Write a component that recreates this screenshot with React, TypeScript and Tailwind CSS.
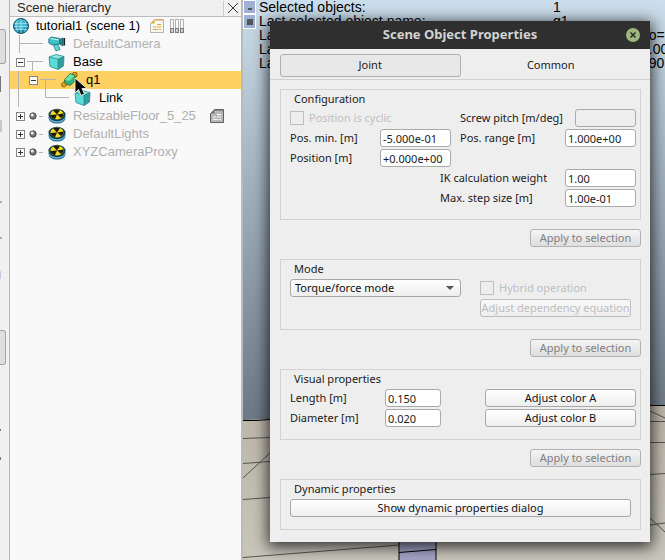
import type { ReactNode } from "react";

const uiFont = "font-['Noto_Sans','Open_Sans',sans-serif]";
const sceneFont = "font-['Liberation_Sans',Arial,sans-serif]";

/* ---------- icons ---------- */

function GlobeIcon() {
  return (
    <svg width="16" height="16" viewBox="0 0 16 16">
      <circle cx="8" cy="8" r="7.5" fill="#1487a8" />
      <circle cx="7" cy="6.5" r="5.5" fill="#3fb8d2" />
      <path
        d="M1 5.5h14M.5 8.5h15M2 11.5h12M8 1v14M4.500 2C2.500 6 2.500 10 4.500 14M11.500 2c2 4 2 8 0 12"
        stroke="#b5e8f2"
        strokeWidth="0.7"
        fill="none"
      />
      <circle cx="8" cy="8" r="7.500" fill="none" stroke="#17566a" />
    </svg>
  );
}

function CameraIcon() {
  return (
    <svg width="18" height="16" viewBox="0 0 18 16">
      <path d="M6 8v3l2 4 4-1.500-2-5z" fill="#5fd6d6" stroke="#217e86" strokeWidth="0.8" />
      <path d="M.8 3L3 1l9 1.500V8L4 9 .8 7z" fill="#3fbfc6" stroke="#1b6a72" strokeWidth="0.8" />
      <path d="M2.500 2.600l8.500 1.200" stroke="#a5f0ee" strokeWidth="1.300" />
      <path d="M12 3.500l3-1.500v8l-3-2z" fill="#2a8f96" stroke="#174e55" strokeWidth="0.8" />
      <path d="M16.300 2v7.500" stroke="#09272b" strokeWidth="1.600" />
    </svg>
  );
}

function CubeIcon() {
  return (
    <svg width="18" height="16" viewBox="0 0 18 16">
      <path d="M1 3l7-2.500L16 2.500 10 5z" fill="#8aeee6" />
      <path d="M1 3l9 2v10.500L2 12.500z" fill="#5bdcd6" />
      <path d="M10 5l6-2.500-.5 9.500-5.500 3.500z" fill="#2f9e9c" />
      <path d="M1 3l7-2.500 8 2-.5 9.500-5.500 3.500-8-3zM1 3l9 2v10.500M10 5l6-2.500" fill="none" stroke="#2b8a8b" strokeWidth="0.8" />
    </svg>
  );
}

function JointIcon() {
  return (
    <svg width="18" height="16" viewBox="0 0 18 16">
      <path d="M.5 12l4-4 3 3.500-4 3.500-2.500-.5z" fill="#e0a412" stroke="#7c5303" strokeWidth="0.8" />
      <path d="M10 3l3-3 3 1v3l-3 3z" fill="#e0a412" stroke="#7c5303" strokeWidth="0.8" />
      <path d="M3.500 8L9 1.500l5 2V9l-5 4.500-5-2z" fill="#31b478" stroke="#14633f" strokeWidth="0.8" />
      <path d="M4 8l5-6 4.500 1.800L8.500 9z" fill="#6fe3a4" />
    </svg>
  );
}

function ModelIcon() {
  return (
    <svg width="18" height="16" viewBox="0 0 18 16">
      <ellipse cx="9" cy="10" rx="8.500" ry="5.500" fill="#1b5f8c" />
      <ellipse cx="9" cy="9" rx="8.300" ry="5.500" fill="#67bfe0" />
      <ellipse cx="9" cy="7" rx="8.500" ry="6.200" fill="#17414f" />
      <ellipse cx="9" cy="6.500" rx="6.500" ry="5" fill="#f3dc1c" />
      <path d="M9 6.500L5 2.500Q8.500.8 12 2.200zM9 6.500l6.300-1Q16 8 13 10zM9 6.500l-2 4.800Q3 10 2.500 7z" fill="#1c1c12" />
    </svg>
  );
}

function SphereIcon() {
  return (
    <svg width="8" height="8" viewBox="0 0 8 8">
      <circle cx="4" cy="4" r="3.200" fill="#777" stroke="#333" strokeWidth="0.800" />
      <circle cx="3.200" cy="3" r="1.500" fill="#eee" />
    </svg>
  );
}

function ScriptIcon({ tone }: { tone: "gold" | "gray" }) {
  const gray = tone === "gray";
  return (
    <svg width="14" height="14" viewBox="0 0 14 14">
      <path d="M4.500.5h9v13H.5v-9z" fill={gray ? "#b8b8b8" : "#f6f6f2"} stroke={gray ? "#606060" : "#b5b5b5"} />
      <path d="M.5 4.500l4-4v4z" fill={gray ? "#777" : "#e5a92b"} />
      <path d="M5 1h8" stroke={gray ? "#606060" : "#e5a92b"} />
      <path d="M7 5.500h4M3 8h3M7 8h4M3 10.500h5M9 10.500h2" stroke={gray ? "#f5f5f5" : "#e5a92b"} strokeWidth="1.200" />
    </svg>
  );
}

function SlidersIcon() {
  return (
    <svg width="14" height="14" viewBox="0 0 14 14">
      {[0.5, 5.5, 10.5].map((x) => (
        <g key={x}>
          <rect x={x} y="0.500" width="3" height="13" fill="#fafafa" stroke="#aaa" strokeWidth="0.900" />
          <rect x={x} y="9.500" width="3" height="4" fill="#ccc" stroke="#777" strokeWidth="0.900" />
        </g>
      ))}
    </svg>
  );
}

function PointerIcon() {
  return (
    <svg width="14" height="20" viewBox="0 0 14 20">
      <path d="M1 1v15l3.500-3.500L7 18.500l3.500-1.500L8 11.500h5z" fill="#0a0a0a" stroke="#f0f0f0" strokeWidth="0.900" />
    </svg>
  );
}

/* ---------- scene hierarchy ---------- */

function Lines({ width, d }: { width: number; d: string }) {
  return (
    <svg width={width} height="18" className="shrink-0" shapeRendering="crispEdges">
      <path d={d} fill="none" stroke="#b4b4b4" />
    </svg>
  );
}

function Expander({ open = false, name }: { open?: boolean; name: string }) {
  return (
    <button
      type="button"
      aria-label={(open ? "Collapse " : "Expand ") + name}
      aria-expanded={open}
      className="flex size-[9px] shrink-0 items-center justify-center border border-[#858585] bg-white"
    >
      <svg width="5" height="5" shapeRendering="crispEdges">
        <path d={open ? "M0 2.500h5" : "M0 2.500h5M2.500 0v5"} stroke="#333" />
      </svg>
    </button>
  );
}

function TreeRow({
  gutter,
  icon,
  label,
  dim = false,
  selected = false,
  extra,
}: {
  gutter: ReactNode;
  icon: ReactNode;
  label: string;
  dim?: boolean;
  selected?: boolean;
  extra?: ReactNode;
}) {
  return (
    <li className={`flex h-[18px] items-center ${selected ? "bg-[#ffd163]" : ""} ${dim ? "text-[#b0b0b0]" : "text-black"}`}>
      {gutter}
      {icon}
      <span className="ml-[7px] whitespace-nowrap">{label}</span>
      {extra}
    </li>
  );
}

function ModelGutter({ name }: { name: string }) {
  return (
    <div className="flex w-[38px] shrink-0 items-center pl-1.5">
      <Expander name={name} />
      <span className="ml-1">
        <SphereIcon />
      </span>
      <span className="ml-0.5 h-px w-1 bg-[#b4b4b4]" />
    </div>
  );
}

function Hierarchy() {
  return (
    <aside className={`relative flex w-[233px] shrink-0 flex-col border-r-2 border-[#bababa] bg-[#f9f9f9] text-[13px] leading-[18px] ${sceneFont}`}>
      <header className="flex h-[17px] items-center justify-between border-b border-[#bdbdbd] bg-[#f0f0f0] pr-[3px] pl-[7px] text-[#2b2b2b]">
        <h2>Scene hierarchy</h2>
        <button type="button" aria-label="Close scene hierarchy" className="flex h-[15px] items-center border-l border-[#ccc] pl-1">
          <svg width="10" height="10">
            <path d="M0 0l10 10M10 0L0 10" stroke="#333" />
          </svg>
        </button>
      </header>
      <ul>
        <li className="flex h-[18px] items-center pl-[3px]">
          <GlobeIcon />
          <span className="mr-2.5 ml-[7px] whitespace-nowrap">tutorial1 (scene 1)</span>
          <ScriptIcon tone="gold" />
          <span className="ml-1.5">
            <SlidersIcon />
          </span>
        </li>
        <TreeRow dim gutter={<Lines width={38} d="M9.500 0v18M9 8.500h24" />} icon={<CameraIcon />} label="DefaultCamera" />
        <TreeRow
          gutter={
            <>
              <Lines width={6} d="" />
              <Expander open name="Base" />
              <Lines width={23} d="M2 8.500h16M7.500 8v10" />
            </>
          }
          icon={<CubeIcon />}
          label="Base"
        />
        <TreeRow
          selected
          gutter={
            <>
              <Lines width={19} d="M8.500 0v18" />
              <Expander open name="q1" />
              <Lines width={23} d="M2 8.500h16M7.500 8v10" />
            </>
          }
          icon={<JointIcon />}
          label="q1"
        />
        <TreeRow gutter={<Lines width={64} d="M8.500 0v18M35.500 0v9M35 8.500h24" />} icon={<CubeIcon />} label="Link" />
        <TreeRow
          dim
          gutter={<ModelGutter name="ResizableFloor_5_25" />}
          icon={<ModelIcon />}
          label="ResizableFloor_5_25"
          extra={
            <span className="ml-3.5">
              <ScriptIcon tone="gray" />
            </span>
          }
        />
        <TreeRow dim gutter={<ModelGutter name="DefaultLights" />} icon={<ModelIcon />} label="DefaultLights" />
        <TreeRow dim gutter={<ModelGutter name="XYZCameraProxy" />} icon={<ModelIcon />} label="XYZCameraProxy" />
      </ul>
      <div className="pointer-events-none absolute top-[77px] left-[64px]">
        <PointerIcon />
      </div>
    </aside>
  );
}

/* ---------- 3D view ---------- */

function SceneBackdrop() {
  return (
    <svg className="absolute inset-0 size-full" viewBox="0 0 422 560" preserveAspectRatio="xMinYMin slice">
      <defs>
        <linearGradient id="sky" x1="0" y1="0" x2="0" y2="1">
          <stop offset="0" stopColor="#ccdeeb" />
          <stop offset="0.500" stopColor="#9dabb9" />
          <stop offset="1" stopColor="#6d7885" />
        </linearGradient>
        <linearGradient id="floor" x1="0" y1="0" x2="0" y2="1">
          <stop offset="0" stopColor="#bbb4a9" />
          <stop offset="1" stopColor="#c9c6bb" />
        </linearGradient>
      </defs>
      <rect width="422" height="420" fill="url(#sky)" />
      <path d="M0 420L27 419 422 405V560H0z" fill="url(#floor)" />
      <path d="M0 420.500h13l14-1M407 405.500h15" stroke="#000" fill="none" />
      <path
        d="M0 438.500l27-1M0 463.500l27-2M0 499.500l27-2M0 478l27-25M0 557.500L156 545M407 411l15 7M407 421.500h15M407 442.500h15M407 474.500l15-1M407 518l15 14M407 525l15-2"
        stroke="#555552"
        fill="none"
      />
      <path d="M156 530h37v30h-37z" fill="#a5a4c8" />
      <path d="M156 560v-20M193 560v-20M156 552.500l37-3" stroke="#000" fill="none" />
    </svg>
  );
}

const statusRows = [
  ["Selected objects:", "1", ""],
  ["Last selected object name:", "q1", ""],
  ["Last selected object type:", "Joint", ", o=+"],
  ["Last selected object position:", "x: +0.0000", "0.00"],
  ["Last selected object orientation:", "a: +000.00", "090"],
];

function SceneView() {
  return (
    <main className={`relative min-w-0 flex-1 overflow-hidden ${sceneFont}`}>
      <SceneBackdrop />
      <div className="relative flex items-start">
        <div className="flex w-[13px] shrink-0 flex-col">
          <button type="button" aria-label="Minimize view" className="flex h-[14px] items-center justify-center border border-white bg-[#9eb0d3] pt-1">
            <span className="h-0.5 w-1 bg-[#555]" />
          </button>
          <button type="button" aria-label="Maximize view" className="flex h-[15px] items-center justify-center border border-white bg-[#9eb0d3]">
            <span className="size-1.5 bg-[#555]" />
          </button>
        </div>
        <dl className="min-w-0 flex-1 pl-[3px] text-[14px] leading-[14px] text-black">
          {statusRows.map(([term, value, tail]) => (
            <div key={term} className="flex whitespace-pre">
              <dt className="w-[294px] shrink-0">{term}</dt>
              <dd className="w-[88px] shrink-0">{value}</dd>
              <dd>{tail}</dd>
            </div>
          ))}
        </dl>
      </div>
    </main>
  );
}

/* ---------- properties dialog ---------- */

const buttonBase = "h-[18px] rounded-[3px] border text-center leading-4 whitespace-nowrap";
const activeButton = "border-[#a8a8a8] bg-linear-to-b from-white to-[#eeeeee] text-[#111]";

function Group({ title, children }: { title: string; children: ReactNode }) {
  return (
    <section className="border border-[#d2d2d2] pr-1 pb-2.5 pl-[9px]">
      <h3 className="h-[19px] px-1 leading-[18px]">{title}</h3>
      {children}
    </section>
  );
}

function Row({ children, end = false }: { children?: ReactNode; end?: boolean }) {
  return <div className={`flex h-5 items-start ${end ? "justify-end" : "justify-between"}`}>{children}</div>;
}

function Field({
  id,
  label,
  value,
  labelWidth,
  width = "w-[71px]",
  disabled = false,
}: {
  id: string;
  label: string;
  value: string;
  labelWidth: string;
  width?: string;
  disabled?: boolean;
}) {
  return (
    <div className="flex shrink-0">
      <label htmlFor={id} className={`shrink-0 leading-[18px] whitespace-nowrap ${labelWidth}`}>
        {label}
      </label>
      <input
        id={id}
        defaultValue={value}
        disabled={disabled}
        className={`h-[18px] rounded-[3px] border border-[#aaa] px-0.5 leading-4 outline-none ${width} ${disabled ? "bg-[#eee]" : "bg-white"}`}
      />
    </div>
  );
}

function Check({ label }: { label: string }) {
  return (
    <label className="flex h-[18px] items-center gap-[5px] text-[#bebebe]">
      <input type="checkbox" disabled className="size-3.5 appearance-none border border-[#bebebe]" />
      {label}
    </label>
  );
}

function Apply() {
  return (
    <div className="flex h-[39px] items-start justify-end pt-[9px]">
      <button
        type="button"
        disabled
        className={`${buttonBase} w-[111px] border-[#b2b2b2] bg-linear-to-b from-[#f5f5f5] to-[#dedede] text-[#808080]`}
      >
        Apply to selection
      </button>
    </div>
  );
}

function PropertiesDialog() {
  return (
    <div
      role="dialog"
      aria-label="Scene Object Properties"
      className={`absolute top-[21px] left-[270px] w-[380px] bg-[#eeeeee] pb-3 text-[11px] text-[#1a1a1a] shadow-[0_3px_14px_2px_rgba(0,0,0,0.75)] ${uiFont}`}
    >
      <header className="relative flex h-7 items-center justify-center bg-[#2f2f2f]">
        <h1 className="text-[13px] font-bold text-[#d3d3d3]">Scene Object Properties</h1>
        <button
          type="button"
          aria-label="Close"
          className="absolute right-2.5 flex size-3.5 items-center justify-center rounded-full bg-[#9cb87c]"
        >
          <svg width="6" height="6">
            <path d="M.5.5l5 5M5.500.5l-5 5" stroke="#2b2b2b" strokeWidth="1.500" />
          </svg>
        </button>
      </header>
      <div className="grid grid-cols-2 border-b border-[#d0d0d0] pt-[5px] pr-[9px] pb-0.5 pl-2.5">
        <button type="button" className="h-[23px] rounded-[3px] border border-[#b0b0b0] bg-[#e8e8e8]">
          Joint
        </button>
        <button type="button" className="h-[23px]">
          Common
        </button>
      </div>
      <div className="pt-[9px] pr-[9px] pl-2.5">
        <Group title="Configuration">
          <Row>
            <Check label="Position is cyclic" />
            <Field id="pitch" label="Screw pitch [m/deg]" value="" labelWidth="w-[115px]" width="w-[61px]" disabled />
          </Row>
          <Row>
            <Field id="posmin" label="Pos. min. [m]" value="-5.000e-01" labelWidth="w-[90px]" />
            <Field id="range" label="Pos. range [m]" value="1.000e+00" labelWidth="w-[105px]" />
          </Row>
          <Row>
            <Field id="position" label="Position [m]" value="+0.000e+00" labelWidth="w-[90px]" />
          </Row>
          <Row end>
            <Field id="ik" label="IK calculation weight" value="1.00" labelWidth="w-[125px]" />
          </Row>
          <Row end>
            <Field id="step" label="Max. step size [m]" value="1.00e-01" labelWidth="w-[125px]" />
          </Row>
        </Group>
        <Apply />
        <Group title="Mode">
          <div className="flex justify-between pr-[5px]">
            <div className="relative h-[18px] w-[171px]">
              <select
                aria-label="Joint mode"
                className={`h-[18px] w-full appearance-none rounded-[3px] border px-1 leading-4 ${activeButton}`}
              >
                <option>Torque/force mode</option>
              </select>
              <svg width="8" height="4" className="pointer-events-none absolute top-[7px] right-[7px]">
                <path d="M0 0h8L4 4z" fill="#555" />
              </svg>
            </div>
            <div className="w-[151px]">
              <Row>
                <Check label="Hybrid operation" />
              </Row>
              <Row>
                <button
                  type="button"
                  disabled
                  className={`${buttonBase} w-full border-[#bebebe] bg-linear-to-b from-[#f8f8f8] to-[#eee] text-[#bebebe]`}
                >
                  Adjust dependency equation
                </button>
              </Row>
            </div>
          </div>
        </Group>
        <Apply />
        <Group title="Visual properties">
          <Row>
            <Field id="length" label="Length [m]" value="0.150" labelWidth="w-[95px]" width="w-14" />
            <button type="button" className={`${buttonBase} ${activeButton} w-[151px]`}>
              Adjust color A
            </button>
          </Row>
          <Row>
            <Field id="diameter" label="Diameter [m]" value="0.020" labelWidth="w-[95px]" width="w-14" />
            <button type="button" className={`${buttonBase} ${activeButton} w-[151px]`}>
              Adjust color B
            </button>
          </Row>
        </Group>
        <Apply />
        <Group title="Dynamic properties">
          <div className="flex h-5 pr-[5px]">
            <button type="button" className={`${buttonBase} ${activeButton} flex-1`}>
              Show dynamic properties dialog
            </button>
          </div>
        </Group>
      </div>
    </div>
  );
}

function ToolStrip() {
  return (
    <nav aria-label="Tools" className="flex w-2.5 shrink-0 flex-col border-r border-[#b5b5b5] bg-[#f0f0f0]">
      <button type="button" aria-label="Camera tool" className="mt-[29px] h-[35px] w-1.5 rounded-r-[3px] border border-l-0 border-[#a5a5a5] bg-[#dfdfdf]" />
      <span className="mt-3 h-4 w-px bg-[#777]" />
      <span className="mt-7 h-3 w-0.5 bg-[#c8c8c8]" />
      <span className="mt-[69px] h-0.5 w-0.5 bg-[#aaa]" />
      <span className="mt-[34px] h-0.5 w-0.5 bg-[#aaa]" />
      <span className="mt-8 h-2 w-px bg-[#c3cce4]" />
      <button type="button" aria-label="Hierarchy tool" className="mt-[51px] h-[35px] w-1.5 rounded-r-[3px] border border-l-0 border-[#a5a5a5] bg-[#dfdfdf]" />
      <span className="mt-16 h-0.5 w-px bg-[#777]" />
      <span className="mt-[26px] h-[3px] w-px bg-[#777]" />
    </nav>
  );
}

export default function App() {
  return (
    <div className="relative flex h-screen w-full overflow-hidden bg-[#f0f0f0]">
      <ToolStrip />
      <Hierarchy />
      <SceneView />
      <PropertiesDialog />
    </div>
  );
}
